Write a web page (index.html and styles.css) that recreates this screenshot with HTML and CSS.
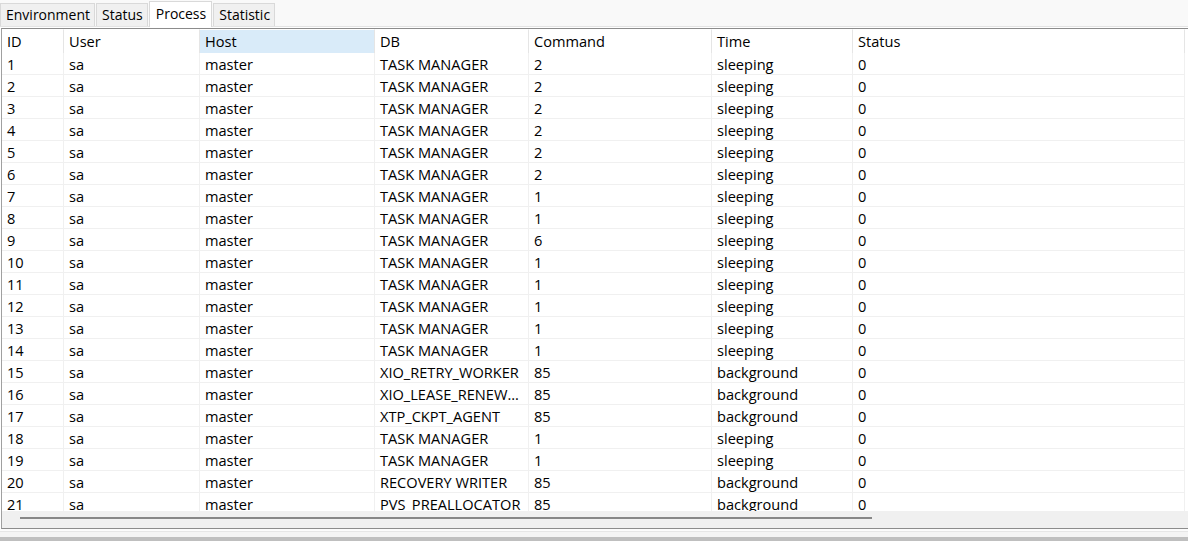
FILE: index.html
```html
<!DOCTYPE html>
<html>
<head>
<meta charset="utf-8">
<link rel="stylesheet" href="styles.css">
</head>
<body>
<div class="tabs">
  <div class="tab">Environment</div>
  <div class="tab">Status</div>
  <div class="tab active">Process</div>
  <div class="tab">Statistic</div>
</div>
<div class="panel">
  <div class="grid-view">
    <table class="grid">
      <colgroup>
        <col class="c-id"><col class="c-user"><col class="c-host"><col class="c-db"><col class="c-cmd"><col class="c-time"><col class="c-status">
      </colgroup>
      <thead>
        <tr><th>ID</th><th>User</th><th class="sorted">Host</th><th>DB</th><th>Command</th><th>Time</th><th>Status</th></tr>
      </thead>
      <tbody>
        <tr><td>1</td><td>sa</td><td>master</td><td>TASK MANAGER</td><td>2</td><td>sleeping</td><td>0</td></tr>
        <tr><td>2</td><td>sa</td><td>master</td><td>TASK MANAGER</td><td>2</td><td>sleeping</td><td>0</td></tr>
        <tr><td>3</td><td>sa</td><td>master</td><td>TASK MANAGER</td><td>2</td><td>sleeping</td><td>0</td></tr>
        <tr><td>4</td><td>sa</td><td>master</td><td>TASK MANAGER</td><td>2</td><td>sleeping</td><td>0</td></tr>
        <tr><td>5</td><td>sa</td><td>master</td><td>TASK MANAGER</td><td>2</td><td>sleeping</td><td>0</td></tr>
        <tr><td>6</td><td>sa</td><td>master</td><td>TASK MANAGER</td><td>2</td><td>sleeping</td><td>0</td></tr>
        <tr><td>7</td><td>sa</td><td>master</td><td>TASK MANAGER</td><td>1</td><td>sleeping</td><td>0</td></tr>
        <tr><td>8</td><td>sa</td><td>master</td><td>TASK MANAGER</td><td>1</td><td>sleeping</td><td>0</td></tr>
        <tr><td>9</td><td>sa</td><td>master</td><td>TASK MANAGER</td><td>6</td><td>sleeping</td><td>0</td></tr>
        <tr><td>10</td><td>sa</td><td>master</td><td>TASK MANAGER</td><td>1</td><td>sleeping</td><td>0</td></tr>
        <tr><td>11</td><td>sa</td><td>master</td><td>TASK MANAGER</td><td>1</td><td>sleeping</td><td>0</td></tr>
        <tr><td>12</td><td>sa</td><td>master</td><td>TASK MANAGER</td><td>1</td><td>sleeping</td><td>0</td></tr>
        <tr><td>13</td><td>sa</td><td>master</td><td>TASK MANAGER</td><td>1</td><td>sleeping</td><td>0</td></tr>
        <tr><td>14</td><td>sa</td><td>master</td><td>TASK MANAGER</td><td>1</td><td>sleeping</td><td>0</td></tr>
        <tr><td>15</td><td>sa</td><td>master</td><td>XIO_RETRY_WORKER</td><td>85</td><td>background</td><td>0</td></tr>
        <tr><td>16</td><td>sa</td><td>master</td><td>XIO_LEASE_RENEW...</td><td>85</td><td>background</td><td>0</td></tr>
        <tr><td>17</td><td>sa</td><td>master</td><td>XTP_CKPT_AGENT</td><td>85</td><td>background</td><td>0</td></tr>
        <tr><td>18</td><td>sa</td><td>master</td><td>TASK MANAGER</td><td>1</td><td>sleeping</td><td>0</td></tr>
        <tr><td>19</td><td>sa</td><td>master</td><td>TASK MANAGER</td><td>1</td><td>sleeping</td><td>0</td></tr>
        <tr><td>20</td><td>sa</td><td>master</td><td>RECOVERY WRITER</td><td>85</td><td>background</td><td>0</td></tr>
        <tr><td>21</td><td>sa</td><td>master</td><td>PVS_PREALLOCATOR</td><td>85</td><td>background</td><td>0</td></tr>
      </tbody>
    </table>
  </div>
  <div class="hscroll"><div class="thumb"></div></div>
</div>
<div class="footer"><div class="footer-line"></div><div class="footer-bar"></div></div>
</body>
</html>
```
FILE: styles.css
```css
html, body {
  margin: 0;
  padding: 0;
  background: #ffffff;
}
body {
  width: 1188px;
  height: 541px;
  overflow: hidden;
  font-family: "Open Sans", "Noto Sans", sans-serif;
  font-size: 14px;
  color: #000;
}
.tabs {
  height: 27px;
  box-sizing: border-box;
  display: flex;
  align-items: flex-end;
  background: #f9f9f9;
  border-bottom: 1px solid #e3e3e3;
}
.tab {
  height: 23px;
  line-height: 22px;
  box-sizing: border-box;
  padding: 0 4px 0 5px;
  background: #f0f0f0;
  border: 1px solid #d9d9d9;
  border-bottom: none;
  margin-right: 1px;
  white-space: nowrap;
}
.tab.active {
  height: 26px;
  line-height: 23px;
  background: #ffffff;
  margin-bottom: -1px;
  padding: 0 5px 0 6px;
}
.panel {
  margin-top: 1px;
  margin-left: 1px;
  border-top: 1px solid #8c8c8c;
  border-left: 1px solid #a0a0a0;
  border-bottom: 1px solid #8c8c8c;
}
.grid-view {
  height: 482px;
  overflow: hidden;
  background: #fff;
}
.grid {
  table-layout: fixed;
  border-collapse: separate;
  border-spacing: 0;
  width: 1183px;
  font-size: 14.6px;
}
.c-id { width: 62px; }
.c-user { width: 136px; }
.c-host { width: 175px; }
.c-db { width: 154px; }
.c-cmd { width: 183px; }
.c-time { width: 141px; }
.c-status { width: 332px; }
.grid th {
  font-weight: normal;
  text-align: left;
  padding: 0 5px;
  line-height: 23px;
  border-top: 1px solid #fff;
  border-right: 1px solid #e5e5e5;
  white-space: nowrap;
  overflow: hidden;
}
.grid th.sorted {
  background: #d9ebf9;
}
.grid td {
  padding: 1px 5px 0;
  line-height: 20px;
  border-right: 1px solid #f0f0f0;
  border-bottom: 1px solid #f0f0f0;
  white-space: nowrap;
  overflow: hidden;
  text-overflow: ellipsis;
}
.hscroll {
  height: 17px;
  background: #f0f0f0;
  padding-top: 6px;
  box-sizing: border-box;
}
.thumb {
  margin-left: 18px;
  width: 852px;
  height: 2px;
  background: #878787;
}
.footer {
  height: 12px;
  display: flex;
  flex-direction: column;
}
.footer-line {
  height: 8px;
  box-sizing: border-box;
  background: #f4f4f4;
  border-top: 2px solid #fbfbfb;
  box-shadow: inset 0 1px 0 #e6e6e6;
}
.footer-bar {
  flex: 1;
  background: #bfbfbf;
}
```
